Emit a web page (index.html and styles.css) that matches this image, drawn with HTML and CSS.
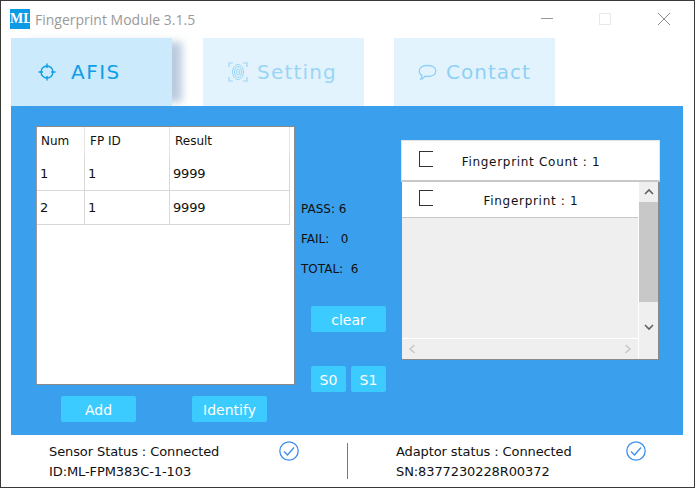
FILE: index.html
```html
<!DOCTYPE html>
<html lang="en">
<head>
    <meta charset="UTF-8">
    <title>Fingerprint Module 3.1.5</title>
    <link rel="stylesheet" href="styles.css">
</head>
<body>
<div class="window">
    <div class="titlebar">
        <span class="logo">ML</span>
        <span class="title">Fingerprint Module 3.1.5</span>
        <div class="winbtns">
            <svg width="14" height="14" viewBox="0 0 14 14"><path d="M1 6.5H13" stroke="#999" fill="none"/></svg>
            <svg width="14" height="14" viewBox="0 0 14 14"><rect x="1.5" y="1.5" width="11" height="11" stroke="#e8e8e8" fill="none"/></svg>
            <svg width="14" height="14" viewBox="0 0 14 14"><path d="M1 1L13 13M13 1L1 13" stroke="#8c8c8c" fill="none"/></svg>
        </div>
    </div>

    <div class="tabs">
        <div class="tab active">
            <svg width="18" height="18" viewBox="0 0 18 18" fill="none" stroke="#0f9ee8" stroke-width="1.4">
                <circle cx="9" cy="9" r="6"/>
                <path d="M9 0.5V5M9 13V17.5M0.5 9H5M13 9H17.5"/>
            </svg>
            <span>AFIS</span>
        </div>
        <div class="tab tab-setting">
            <svg width="20" height="20" viewBox="0 0 20 20" fill="none" stroke="#9ad5f6">
                <path d="M1 5V1H5M15 1H19V5M1 15V19H5M15 19H19V15" stroke-width="1.2"/>
                <ellipse cx="10" cy="10" rx="5.5" ry="7.5" stroke-width="1"/>
                <ellipse cx="10" cy="10" rx="3.5" ry="5.5" stroke-width="1"/>
                <ellipse cx="10" cy="10" rx="1.5" ry="3" stroke-width="1"/>
            </svg>
            <span>Setting</span>
        </div>
        <div class="tab tab-contact">
            <svg width="19" height="17" viewBox="0 0 19 17" fill="none" stroke="#8fd0f5" stroke-width="1.3">
                <path d="M9.5 1.5C14 1.5 17.8 3.4 17.8 7S14 12.5 9.5 12.5C8.6 12.5 7.8 12.4 7 12.2C6 13.8 4.6 15 2.8 15.3C3.6 14.2 4 13 4 11.6C2.2 10.6 1.2 9 1.2 7C1.2 3.4 5 1.5 9.5 1.5Z"/>
            </svg>
            <span>Contact</span>
        </div>
    </div>

    <div class="main">
        <div class="left-col">
            <div class="table-box">
                <table class="results">
                    <thead>
                        <tr><th class="c-num">Num</th><th class="c-id">FP ID</th><th class="c-res">Result</th></tr>
                    </thead>
                    <tbody>
                        <tr><td>1</td><td>1</td><td>9999</td></tr>
                        <tr><td>2</td><td>1</td><td>9999</td></tr>
                    </tbody>
                </table>
            </div>
            <div class="left-btns">
                <button class="btn btn-wide">Add</button>
                <button class="btn btn-wide">Identify</button>
            </div>
        </div>

        <div class="mid-col">
            <div class="stats">
                <div>PASS: 6</div>
                <div>FAIL:&nbsp;&nbsp;&nbsp;0</div>
                <div>TOTAL:&nbsp;&nbsp;6</div>
            </div>
            <div class="mid-btns">
                <button class="btn btn-wide">clear</button>
                <div class="small-btns">
                    <button class="btn btn-small">S0</button>
                    <button class="btn btn-small">S1</button>
                </div>
            </div>
        </div>

        <div class="fp-panel">
            <div class="fp-head">
                <span class="check"></span>
                <span class="fp-label">Fingerprint Count : 1</span>
            </div>
            <div class="fp-body">
                <div class="fp-list">
                    <div class="fp-row">
                        <span class="check"></span>
                        <span class="fp-label">Fingerprint : 1</span>
                    </div>
                    <div class="hscroll">
                        <svg width="8" height="10" viewBox="0 0 8 10"><path d="M6.5 1L2 5L6.5 9" stroke="#c8c8c8" stroke-width="1.6" fill="none"/></svg>
                        <svg width="8" height="10" viewBox="0 0 8 10"><path d="M1.5 1L6 5L1.5 9" stroke="#c8c8c8" stroke-width="1.6" fill="none"/></svg>
                    </div>
                </div>
                <div class="vscroll">
                    <div class="arrow"><svg width="10" height="8" viewBox="0 0 10 8"><path d="M1 6L5 2L9 6" stroke="#606060" stroke-width="1.6" fill="none"/></svg></div>
                    <div class="thumb"></div>
                    <div class="arrow arrow-down"><svg width="10" height="8" viewBox="0 0 10 8"><path d="M1 2L5 6L9 2" stroke="#606060" stroke-width="1.6" fill="none"/></svg></div>
                </div>
            </div>
        </div>
    </div>

    <div class="statusbar">
        <div class="status status-left">
            <div class="status-text">
                <div>Sensor Status : Connected</div>
                <div>ID:ML-FPM383C-1-103</div>
            </div>
            <svg class="ok" width="20" height="20" viewBox="0 0 20 20" fill="none" stroke="#3d8ff0" stroke-width="1.3">
                <circle cx="10" cy="10" r="9.2"/>
                <path d="M5 10.5L8.5 14L15 6.5"/>
            </svg>
        </div>
        <div class="divider"></div>
        <div class="status status-right">
            <div class="status-text">
                <div>Adaptor status : Connected</div>
                <div>SN:8377230228R00372</div>
            </div>
            <svg class="ok" width="20" height="20" viewBox="0 0 20 20" fill="none" stroke="#3d8ff0" stroke-width="1.3">
                <circle cx="10" cy="10" r="9.2"/>
                <path d="M5 10.5L8.5 14L15 6.5"/>
            </svg>
        </div>
    </div>
</div>
</body>
</html>
```

FILE: styles.css
```css
* {
    box-sizing: border-box;
}
body {
    margin: 0;
    background: #fff;
    font-family: "DejaVu Sans", sans-serif;
    overflow: hidden;
}
.window {
    width: 695px;
    height: 488px;
    background: #fff;
    border: 1px solid #3a3a36;
}

/* title bar */
.titlebar {
    height: 37px;
    display: flex;
    align-items: center;
    padding: 0 23px 0 9px;
}
.logo {
    width: 20px;
    height: 20px;
    background: #0d9be6;
    color: #fff;
    font-family: "Liberation Serif", serif;
    font-weight: bold;
    font-size: 14px;
    line-height: 20px;
    text-align: center;
    margin-top: -1px;
}
.title {
    margin-left: 5px;
    font-family: "Open Sans", sans-serif;
    font-size: 14px;
    color: #999;
}
.winbtns {
    margin-left: auto;
    display: flex;
    gap: 45px;
    margin-top: -1px;
}
.winbtns svg:first-child {
    margin-right: -1px;
}

/* tabs */
.tabs {
    height: 68px;
    display: flex;
    gap: 31px;
    padding-left: 10px;
}
.tab {
    width: 161px;
    display: flex;
    align-items: center;
    background: #e2f3fd;
    font-size: 20px;
    letter-spacing: 1.2px;
    color: #9ad5f6;
}
.tab.active {
    background: #cbeafc;
    color: #0f9ee8;
    box-shadow: 14px 0 8px -4px rgba(130, 160, 195, 0.55);
    gap: 15px;
    padding-left: 27px;
    letter-spacing: 1.5px;
}
.tab-setting {
    gap: 9px;
    padding-left: 25px;
}
.tab-contact {
    color: #8fd0f5;
    gap: 9px;
    padding-left: 24px;
    margin-left: -1px;
    letter-spacing: 1px;
}

/* main blue area */
.main {
    height: 329px;
    margin: 0 11px 0 10px;
    background: #3a9fec;
    display: flex;
    padding: 20px 0 0 25px;
}
.left-col {
    width: 259px;
}
.table-box {
    height: 259px;
    background: #fff;
    border: 1px solid #8a8a8a;
    border-left-color: #9a9a9a;
}
.results {
    border-collapse: separate;
    border-spacing: 0;
    table-layout: fixed;
    width: 253px;
    color: #111;
}
.results th {
    height: 30px;
    font-weight: normal;
    font-size: 12px;
    text-align: left;
    padding: 0 0 2px 5px;
    border-right: 1px solid #e4e4e4;
}
.results .c-num {
    width: 48px;
    padding-left: 4px;
}
.results .c-id {
    width: 85px;
}
.results td {
    height: 34px;
    font-size: 13px;
    letter-spacing: -0.2px;
    padding: 0 0 0 3px;
    border-right: 1px solid #d8d8d8;
    border-bottom: 1px solid #d8d8d8;
}
.left-btns {
    display: flex;
    gap: 56px;
    margin: 11px 0 0 25px;
}
.btn {
    height: 26px;
    padding: 2px 0 0;
    border: none;
    border-radius: 2px;
    background: #3bcbff;
    color: #fff;
    font-family: "DejaVu Sans", sans-serif;
    font-size: 14px;
}
.btn-wide {
    width: 75px;
}
.btn-small {
    width: 35px;
}

/* middle column */
.mid-col {
    width: 106px;
    padding-left: 6px;
}
.stats {
    margin-top: 75px;
    font-size: 12px;
    color: #111;
}
.stats div {
    height: 30px;
    line-height: 16px;
}
.mid-btns {
    margin: 15px 0 0 10px;
}
.small-btns {
    display: flex;
    gap: 5px;
    margin-top: 34px;
}

/* fingerprint panel */
.fp-panel {
    width: 259px;
    height: 220px;
    margin-top: 14px;
    display: flex;
    flex-direction: column;
}
.fp-head {
    height: 42px;
    flex: none;
    background: #fff;
    display: flex;
    align-items: center;
    border: 1px solid #e4e4e4;
    border-bottom: 2px solid #c8c8c8;
    padding-left: 17px;
}
.check {
    width: 14px;
    height: 16px;
    border: 1px solid #333;
    border-right: none;
    flex: none;
    margin-top: -4px;
}
.fp-label {
    flex: 1;
    text-align: center;
    font-size: 12px;
    letter-spacing: 0.7px;
    color: #111;
    margin-top: 3px;
}
.fp-head .fp-label {
    padding-right: 30px;
}
.fp-body {
    flex: 1;
    display: flex;
    margin-right: 1px;
    border: 1px solid #8a8a8a;
    border-top: none;
    background: #efefef;
}
.fp-list {
    flex: 1;
    display: flex;
    flex-direction: column;
    justify-content: space-between;
}
.fp-row {
    height: 36px;
    background: #fff;
    display: flex;
    align-items: center;
    padding-left: 17px;
    border-bottom: 1px solid #c8c8c8;
}
.fp-row .fp-label {
    padding-right: 9px;
}
.hscroll {
    height: 21px;
    display: flex;
    justify-content: space-between;
    align-items: center;
    padding: 0 6px;
    border-top: 1px solid #fff;
}
.vscroll {
    width: 20px;
    display: flex;
    flex-direction: column;
    border-left: 1px solid #fff;
}
.arrow {
    height: 20px;
    flex: none;
    display: flex;
    align-items: center;
    justify-content: center;
}
.thumb {
    height: 100px;
    flex: none;
    background: #c8c8c8;
}
.arrow-down {
    height: 30px;
    margin-top: 10px;
}

/* status bar */
.statusbar {
    height: 52px;
    display: flex;
    align-items: center;
    font-size: 13px;
    letter-spacing: -0.1px;
    color: #111;
}
.status {
    display: flex;
    align-items: flex-start;
}
.status-left {
    width: 346px;
    padding-left: 48px;
}
.status-right {
    padding-left: 48px;
}
.status-text {
    width: 230px;
    line-height: 20px;
    padding-top: 1px;
    margin-bottom: -1px;
}
.divider {
    width: 1px;
    height: 36px;
    background: #7a7a7a;
}
```
